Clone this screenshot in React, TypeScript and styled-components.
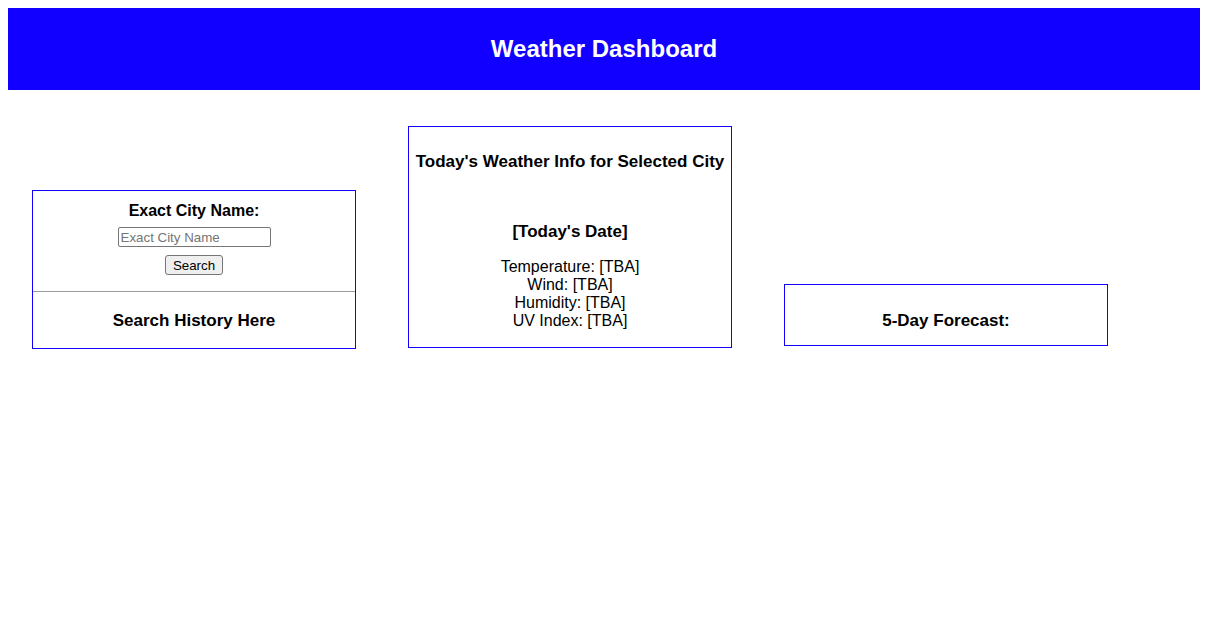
import React from "react";
import styled, { createGlobalStyle } from "styled-components";

const GlobalStyle = createGlobalStyle`
  body {
    margin: 8px;
    font-family: "Liberation Sans", Arial, Helvetica, sans-serif;
    color: #000;
    background: #fff;
  }
`;

const Header = styled.header`
  height: 82px;
  background: #1100ff;
  display: flex;
  align-items: center;
  justify-content: center;
`;

const Title = styled.h1`
  margin: 0;
  color: #fff;
  font-size: 24px;
  font-weight: bold;
  line-height: 28px;
`;

const Main = styled.main`
  display: flex;
  align-items: last baseline;
  gap: 52px;
  padding: 36px 24px 0;
`;

const Card = styled.section`
  width: 322px;
  border: 1px solid #1100ff;
  text-align: center;
  flex: none;
`;

const SearchForm = styled.form`
  display: flex;
  flex-direction: column;
  align-items: center;
  gap: 8px;
  padding: 11px 0 16px;
  border-bottom: 1px solid #9c9c9c;
`;

const Label = styled.label`
  margin-bottom: -1px;
  font-size: 16px;
  font-weight: bold;
  line-height: 18px;
`;

const Input = styled.input`
  box-sizing: border-box;
  width: 153px;
  height: 20px;
  padding: 1px 2px;
  border: 1px solid #767676;
  border-radius: 2px;
  font-family: "Liberation Sans", Arial, sans-serif;
  font-size: 13.33px;
  &::placeholder {
    color: #757575;
  }
`;

const Button = styled.button`
  box-sizing: border-box;
  width: 58px;
  height: 20px;
  padding: 0;
  border: 1px solid #767676;
  border-radius: 3px;
  background: #efefef;
  font-family: "Liberation Sans", Arial, sans-serif;
  font-size: 13.33px;
  color: #000;
`;

const Heading = styled.h3<{ $top: number; $bottom: number }>`
  margin: 0;
  padding: ${(p) => p.$top}px 0 ${(p) => p.$bottom}px;
  font-size: 17px;
  font-weight: bold;
  line-height: 20px;
`;

const WeatherBody = styled.div`
  padding: 25px 0 17px;
`;

const DateHeading = styled.h4`
  margin: 50px 0 16px;
  font-size: 17px;
  font-weight: bold;
  line-height: 20px;
`;

const InfoList = styled.div`
  display: flex;
  flex-direction: column;
  font-size: 16px;
  line-height: 18px;
`;

export default function App() {
  return (
    <>
      <GlobalStyle />
      <Header>
        <Title>Weather Dashboard</Title>
      </Header>
      <Main>
        <Card>
          <SearchForm onSubmit={(e) => e.preventDefault()}>
            <Label htmlFor="city">Exact City Name:</Label>
            <Input id="city" type="text" placeholder="Exact City Name" />
            <Button type="submit">Search</Button>
          </SearchForm>
          <Heading $top={19} $bottom={17}>Search History Here</Heading>
        </Card>
        <Card>
          <WeatherBody>
            <Heading $top={0} $bottom={0}>Today's Weather Info for Selected City</Heading>
            <DateHeading>[Today's Date]</DateHeading>
            <InfoList>
              <span>Temperature: [TBA]</span>
              <span>Wind: [TBA]</span>
              <span>Humidity: [TBA]</span>
              <span>UV Index: [TBA]</span>
            </InfoList>
          </WeatherBody>
        </Card>
        <Card>
          <Heading $top={26} $bottom={14}>5-Day Forecast:</Heading>
        </Card>
      </Main>
    </>
  );
}
